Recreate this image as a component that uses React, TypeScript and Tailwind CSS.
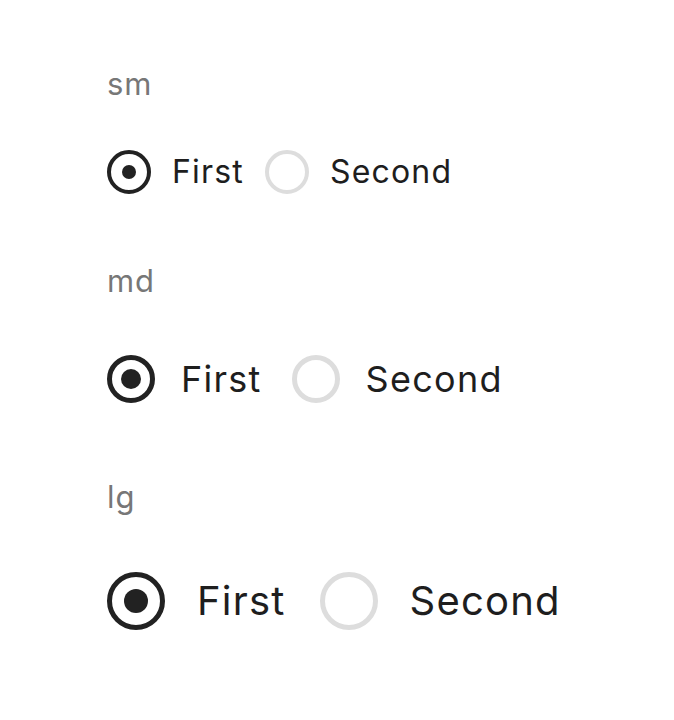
const font = { fontFamily: "Inter, 'Noto Sans', sans-serif" };

type Size = "sm" | "md" | "lg";

const sizes: Record<
  Size,
  { circle: string; dot: string; text: string; gap: string; itemGap: string }
> = {
  sm: {
    circle: "w-[44px] h-[44px] border-[4px]",
    dot: "w-[14px] h-[14px]",
    text: "text-[32px] tracking-[0.037em]",
    gap: "gap-[21px]",
    itemGap: "gap-[21px]",
  },
  md: {
    circle: "w-[48px] h-[48px] border-[5px]",
    dot: "w-[20px] h-[20px]",
    text: "text-[36px] tracking-[0.035em]",
    gap: "gap-[26px]",
    itemGap: "gap-[30px]",
  },
  lg: {
    circle: "w-[58px] h-[58px] border-[5px]",
    dot: "w-[24px] h-[24px]",
    text: "text-[40px] tracking-[0.03em]",
    gap: "gap-[32px]",
    itemGap: "gap-[34px]",
  },
};

function Radio({ size, label, checked }: { size: Size; label: string; checked?: boolean }) {
  const s = sizes[size];
  return (
    <label className={`flex items-center ${s.gap}`}>
      <span
        className={`flex items-center justify-center rounded-full ${s.circle} ${
          checked ? "border-[#222222]" : "border-[#dddddd]"
        }`}
      >
        {checked && <span className={`rounded-full bg-[#222222] ${s.dot}`} />}
      </span>
      <span className={`${s.text} leading-none text-[#1e1e1e]`}>{label}</span>
    </label>
  );
}

function Group({ size, className }: { size: Size; className: string }) {
  return (
    <div className={`flex items-center ${sizes[size].itemGap} ${className}`}>
      <Radio size={size} label="First" checked />
      <Radio size={size} label="Second" />
    </div>
  );
}

const labelCls = "h-[40px] leading-[40px] text-[31px] tracking-[0.03em] text-[#777777]";

export default function App() {
  return (
    <div className="min-h-[720px] bg-white pl-[107px] pt-[64px]" style={font}>
      <div className={labelCls}>sm</div>
      <Group size="sm" className="mt-[46px]" />
      <div className={`mt-[67px] ${labelCls}`}>md</div>
      <Group size="md" className="mt-[54px]" />
      <div className={`mt-[74px] ${labelCls}`}>lg</div>
      <Group size="lg" className="mt-[55px]" />
    </div>
  );
}
